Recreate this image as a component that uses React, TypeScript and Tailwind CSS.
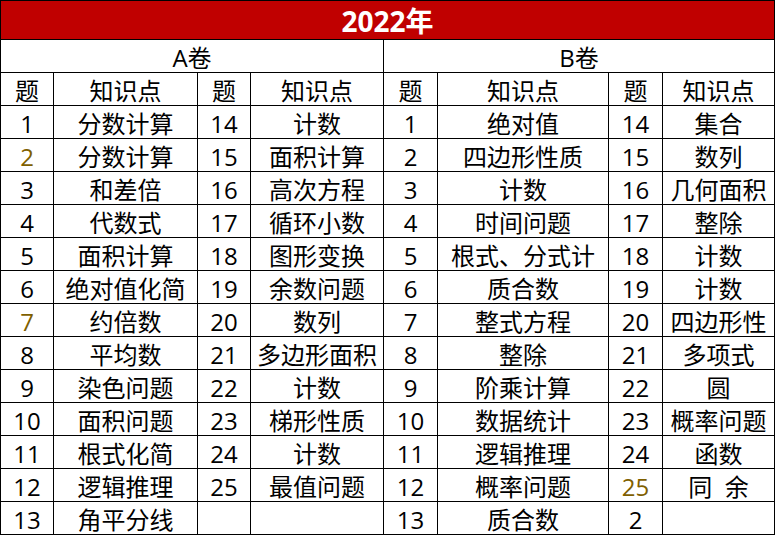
import React from "react";

type Cell = { t: string; brown?: boolean };

const rows: Cell[][] = [
  [{ t: "1" }, { t: "分数计算" }, { t: "14" }, { t: "计数" }, { t: "1" }, { t: "绝对值" }, { t: "14" }, { t: "集合" }],
  [{ t: "2", brown: true }, { t: "分数计算" }, { t: "15" }, { t: "面积计算" }, { t: "2" }, { t: "四边形性质" }, { t: "15" }, { t: "数列" }],
  [{ t: "3" }, { t: "和差倍" }, { t: "16" }, { t: "高次方程" }, { t: "3" }, { t: "计数" }, { t: "16" }, { t: "几何面积" }],
  [{ t: "4" }, { t: "代数式" }, { t: "17" }, { t: "循环小数" }, { t: "4" }, { t: "时间问题" }, { t: "17" }, { t: "整除" }],
  [{ t: "5" }, { t: "面积计算" }, { t: "18" }, { t: "图形变换" }, { t: "5" }, { t: "根式、分式计" }, { t: "18" }, { t: "计数" }],
  [{ t: "6" }, { t: "绝对值化简" }, { t: "19" }, { t: "余数问题" }, { t: "6" }, { t: "质合数" }, { t: "19" }, { t: "计数" }],
  [{ t: "7", brown: true }, { t: "约倍数" }, { t: "20" }, { t: "数列" }, { t: "7" }, { t: "整式方程" }, { t: "20" }, { t: "四边形性" }],
  [{ t: "8" }, { t: "平均数" }, { t: "21" }, { t: "多边形面积" }, { t: "8" }, { t: "整除" }, { t: "21" }, { t: "多项式" }],
  [{ t: "9" }, { t: "染色问题" }, { t: "22" }, { t: "计数" }, { t: "9" }, { t: "阶乘计算" }, { t: "22" }, { t: "圆" }],
  [{ t: "10" }, { t: "面积问题" }, { t: "23" }, { t: "梯形性质" }, { t: "10" }, { t: "数据统计" }, { t: "23" }, { t: "概率问题" }],
  [{ t: "11" }, { t: "根式化简" }, { t: "24" }, { t: "计数" }, { t: "11" }, { t: "逻辑推理" }, { t: "24" }, { t: "函数" }],
  [{ t: "12" }, { t: "逻辑推理" }, { t: "25" }, { t: "最值问题" }, { t: "12" }, { t: "概率问题" }, { t: "25", brown: true }, { t: "同\u00a0\u00a0余" }],
  [{ t: "13" }, { t: "角平分线" }, { t: "" }, { t: "" }, { t: "13" }, { t: "质合数" }, { t: "2" }, { t: "" }],
];

const headers = ["题", "知识点", "题", "知识点", "题", "知识点", "题", "知识点"];

export default function App() {
  return (
    <div
      className="w-[775px] h-[535px] bg-white"
      style={{ fontFamily: '"Open Sans", "Noto Sans CJK SC", sans-serif' }}
    >
      <div className="grid grid-cols-[52px_143px_52px_132px_53px_170px_53px_111px] grid-rows-[38px_32px_32px_repeat(13,32px)] gap-px bg-black p-px w-[775px] h-[535px]">
        <div className="col-span-8 bg-[#c00000] flex items-center justify-center text-white font-bold text-[28px] leading-none pt-px">
          2022年
        </div>
        <div className="col-span-4 bg-white flex items-center justify-center text-[24px] leading-none text-black pt-[3px]">
          A卷
        </div>
        <div className="col-span-4 bg-white flex items-center justify-center text-[24px] leading-none text-black pt-[3px]">
          B卷
        </div>
        {headers.map((h, i) => (
          <div
            key={"h" + i}
            className="bg-white flex items-center justify-center text-[24px] leading-none text-black pt-[3px]"
          >
            {h}
          </div>
        ))}
        {rows.map((r, ri) =>
          r.map((c, ci) => (
            <div
              key={ri + "-" + ci}
              className={
                "bg-white flex items-center justify-center text-[24px] leading-none whitespace-nowrap overflow-hidden pt-[3px] " +
                (c.brown ? "text-[#7f6000]" : "text-black")
              }
            >
              {c.t}
            </div>
          ))
        )}
      </div>
    </div>
  );
}
